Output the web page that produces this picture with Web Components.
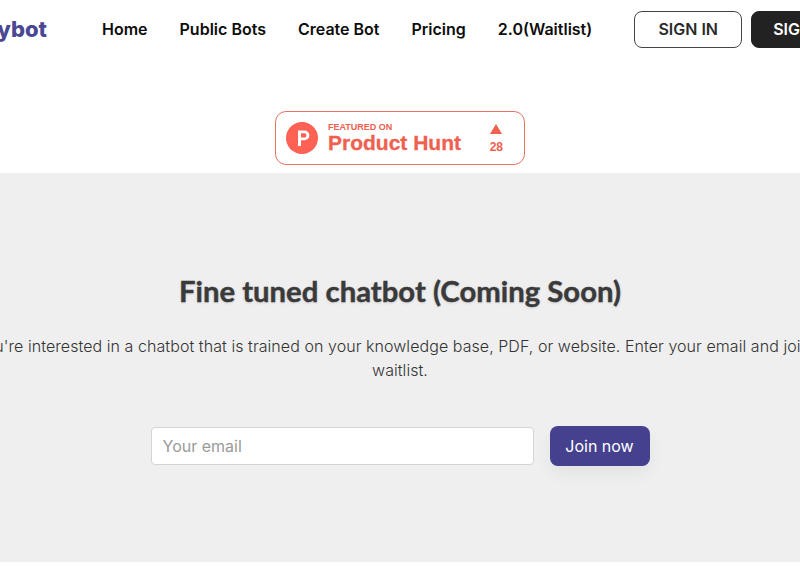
<!DOCTYPE html>
<html lang="en">
<head>
<meta charset="utf-8">
<title>Waitlist</title>
<style>
    html, body {
        margin: 0;
        padding: 0;
        background: #fff;
        overflow: hidden;
        height: 576px;
        font-family: Inter, "Liberation Sans", sans-serif;
    }
</style>
</head>
<body>
<site-header></site-header>
<ph-badge votes="28"></ph-badge>
<waitlist-section heading="Fine tuned chatbot (Coming Soon)">
    If you're interested in a chatbot that is trained on your knowledge base, PDF, or website. Enter your email and join the waitlist.
</waitlist-section>

<script>
class SiteHeader extends HTMLElement {
    connectedCallback() {
        this.attachShadow({ mode: 'open' });
        this.shadowRoot.innerHTML = `
            <style>
                :host {
                    display: block;
                    height: 58px;
                    overflow: hidden;
                }
                .bar {
                    display: flex;
                    justify-content: center;
                    align-items: center;
                    height: 58px;
                }
                .inner {
                    display: flex;
                    flex: none;
                    align-items: center;
                    width: 926px;
                }
                .logo {
                    width: 110px;
                    text-align: right;
                    font-size: 22px;
                    font-weight: 800;
                    color: #4b4793;
                    white-space: nowrap;
                    margin-right: 55px;
                }
                nav {
                    display: flex;
                    gap: 32px;
                    margin-right: 42px;
                }
                nav a {
                    color: #0d0d0d;
                    font-size: 16px;
                    font-weight: 600;
                    text-decoration: none;
                    white-space: nowrap;
                }
                .btn {
                    box-sizing: border-box;
                    height: 37px;
                    width: 108px;
                    border-radius: 8px;
                    border: 1px solid #444;
                    background: #fff;
                    color: #2a2a2a;
                    font: 600 16px Inter, sans-serif;
                    flex: none;
                    margin-right: 9px;
                }
                .btn.dark {
                    width: 109px;
                    background: #222;
                    border-color: #222;
                    color: #fff;
                    margin-right: 0;
                }
            </style>
            <div class="bar">
                <div class="inner">
                    <div class="logo">Copybot</div>
                    <nav>
                        <a href="#">Home</a>
                        <a href="#">Public Bots</a>
                        <a href="#">Create Bot</a>
                        <a href="#">Pricing</a>
                        <a href="#">2.0(Waitlist)</a>
                    </nav>
                    <button class="btn">SIGN IN</button>
                    <button class="btn dark">SIGN UP</button>
                </div>
            </div>
        `;
    }
}

class PhBadge extends HTMLElement {
    connectedCallback() {
        this.attachShadow({ mode: 'open' });
        const votes = this.getAttribute('votes');
        this.shadowRoot.innerHTML = `
            <style>
                :host {
                    display: flex;
                    justify-content: center;
                    padding: 53px 0 8px;
                    font-family: "Liberation Sans", Arial, sans-serif;
                    color: #f0604f;
                }
                .badge {
                    box-sizing: border-box;
                    display: flex;
                    align-items: center;
                    width: 250px;
                    height: 54px;
                    padding: 0 21px 0 10px;
                    background: #fff;
                    border: 1px solid #e57364;
                    border-radius: 11px;
                }
                svg.mark {
                    flex: none;
                    margin-right: 10px;
                }
                .names {
                    flex: 1;
                    display: flex;
                    flex-direction: column;
                }
                .small {
                    font-size: 9px;
                    font-weight: 700;
                    line-height: 10px;
                }
                .big {
                    font-size: 21px;
                    font-weight: 700;
                    line-height: 22px;
                    white-space: nowrap;
                    -webkit-text-stroke: 0.3px #f0604f;
                }
                .votes {
                    display: flex;
                    flex-direction: column;
                    align-items: center;
                    gap: 7px;
                    padding-top: 1px;
                    font-size: 12px;
                    font-weight: 700;
                    line-height: 13px;
                }
            </style>
            <div class="badge">
                <svg class="mark" width="32" height="32" viewBox="0 0 32 32">
                    <circle cx="16" cy="16" r="16" fill="#ff6154"/>
                    <path d="M12 8.5h6.5a4.9 4.9 0 0 1 0 9.8H15V24h-3z M15 11.3v4.2h3.4a2.1 2.1 0 0 0 0-4.2z" fill="#fff" fill-rule="evenodd"/>
                </svg>
                <div class="names">
                    <span class="small">FEATURED ON</span>
                    <span class="big">Product Hunt</span>
                </div>
                <div class="votes">
                    <svg width="12" height="10" viewBox="0 0 12 10"><path d="M6 0l6 10H0z" fill="#f0604f"/></svg>
                    <span>${votes}</span>
                </div>
            </div>
        `;
    }
}

class WaitlistForm extends HTMLElement {
    connectedCallback() {
        this.attachShadow({ mode: 'open' });
        this.shadowRoot.innerHTML = `
            <style>
                :host {
                    display: flex;
                    justify-content: center;
                    align-items: center;
                    gap: 16px;
                }
                input {
                    box-sizing: border-box;
                    width: 383px;
                    height: 38px;
                    padding: 0 11px;
                    border: 1px solid #d4d4d4;
                    border-radius: 4px;
                    background: #fff;
                    font: 400 16px Inter, sans-serif;
                }
                input::placeholder {
                    color: #9a9a9a;
                }
                button {
                    width: 100px;
                    height: 40px;
                    border: 0;
                    border-radius: 8px;
                    background: #45418f;
                    color: #fff;
                    font: 400 16px Inter, sans-serif;
                    box-shadow: 0 8px 16px rgba(0, 0, 0, 0.05);
                }
            </style>
            <input type="email" placeholder="Your email">
            <button>Join now</button>
        `;
    }
}

class WaitlistSection extends HTMLElement {
    connectedCallback() {
        this.attachShadow({ mode: 'open' });
        this.shadowRoot.innerHTML = `
            <style>
                :host {
                    display: block;
                    box-sizing: border-box;
                    height: 389px;
                    padding-top: 96px;
                    background: #efefef;
                    overflow: hidden;
                }
                h2 {
                    margin: 0 0 21px;
                    text-align: center;
                    font: 700 29.3px/44px Lato, sans-serif;
                    color: #3a3a3a;
                    -webkit-text-stroke: 0.4px #3a3a3a;
                    text-shadow: 0 1px 3px rgba(0, 0, 0, 0.15);
                }
                .desc {
                    display: flex;
                    justify-content: center;
                    margin-bottom: 44px;
                }
                p {
                    flex: none;
                    width: 890px;
                    margin: 0;
                    text-align: center;
                    font-size: 16px;
                    font-weight: 300;
                    letter-spacing: 0.06px;
                    line-height: 24px;
                    color: #333;
                }
            </style>
            <h2>${this.getAttribute('heading')}</h2>
            <div class="desc"><p><slot></slot></p></div>
            <waitlist-form></waitlist-form>
        `;
    }
}

customElements.define('site-header', SiteHeader);
customElements.define('ph-badge', PhBadge);
customElements.define('waitlist-form', WaitlistForm);
customElements.define('waitlist-section', WaitlistSection);
</script>
</body>
</html>
